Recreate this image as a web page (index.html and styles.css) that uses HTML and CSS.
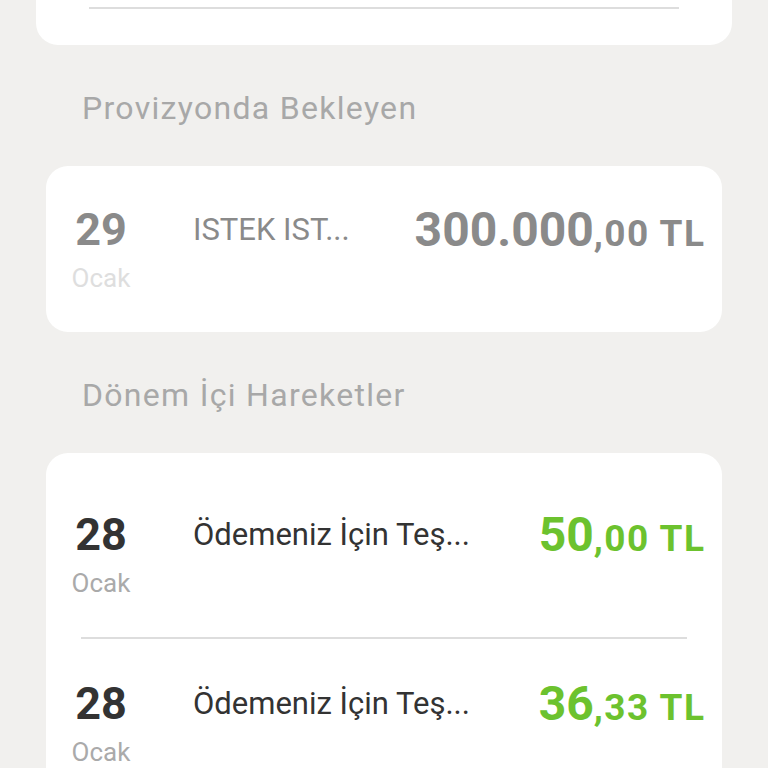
FILE: index.html
```html
<!DOCTYPE html>
<html lang="tr">
<head>
    <meta charset="UTF-8">
    <meta name="viewport" content="width=device-width, initial-scale=1.0">
    <title>Hesap Hareketleri</title>
    <link rel="stylesheet" href="styles.css">
</head>
<body>

<div class="page">
    <div class="card card-top">
        <div class="top-line"></div>
    </div>

    <h2 class="section-title">Provizyonda Bekleyen</h2>

    <div class="card card-pending">
        <div class="row">
            <div class="date">
                <span class="day">29</span>
                <span class="month">Ocak</span>
            </div>
            <div class="desc">ISTEK IST...</div>
            <div class="amount"><span class="main">300.000</span><span class="frac">,00 TL</span></div>
        </div>
    </div>

    <h2 class="section-title title-second">Dönem İçi Hareketler</h2>

    <div class="card card-moves">
        <div class="row">
            <div class="date">
                <span class="day">28</span>
                <span class="month">Ocak</span>
            </div>
            <div class="desc">Ödemeniz İçin Teş...</div>
            <div class="amount"><span class="main">50</span><span class="frac">,00 TL</span></div>
        </div>
        <div class="divider"></div>
        <div class="row">
            <div class="date">
                <span class="day">28</span>
                <span class="month">Ocak</span>
            </div>
            <div class="desc">Ödemeniz İçin Teş...</div>
            <div class="amount"><span class="main">36</span><span class="frac">,33 TL</span></div>
        </div>
    </div>
</div>

</body>
</html>
```

FILE: styles.css
```css
body {
    font-family: Roboto, "Noto Sans", sans-serif;
    margin: 0;
    padding: 0;
    background-color: #f1f0ee;
    overflow: hidden;
}
.page {
    height: 768px;
    overflow: hidden;
}
.card {
    background-color: #ffffff;
    border-radius: 22px;
}
.card-top {
    margin: -60px 36px 0 36px;
    height: 105px;
    padding: 0 53px;
    box-sizing: border-box;
    display: flex;
    flex-direction: column;
    justify-content: flex-end;
}
.top-line {
    height: 2px;
    background-color: #dddddd;
    margin-bottom: 36px;
}
.section-title {
    margin: 0;
    padding: 44px 0 0 82px;
    height: 80px;
    box-sizing: border-box;
    font-size: 32px;
    font-weight: 400;
    letter-spacing: 1.3px;
    color: #a8a8a8;
    line-height: 38px;
}
.card-pending,
.card-moves {
    margin: 0 46px;
    padding: 0 18px 0 25px;
}
.card-pending {
    margin-top: 41px;
    height: 166px;
    padding-top: 40px;
    box-sizing: border-box;
}
.title-second {
    padding-top: 44px;
}
.card-moves {
    margin-top: 41px;
    padding-top: 58px;
    padding-bottom: 80px;
}
.row {
    display: flex;
    align-items: flex-start;
}
.date {
    width: 60px;
    display: flex;
    flex-direction: column;
    align-items: center;
}
.day {
    font-size: 45px;
    font-weight: 700;
    line-height: 48px;
    color: #333333;
}
.month {
    font-size: 26px;
    line-height: 32px;
    color: #aaaaaa;
    margin-top: 8px;
}
.desc {
    margin-left: 62px;
    flex: 1;
    font-size: 31px;
    line-height: 48px;
    color: #333333;
}
.amount {
    font-weight: 700;
    line-height: 48px;
    color: #6cc22e;
    white-space: nowrap;
}
.amount .main {
    font-size: 48px;
}
.amount .frac {
    font-size: 37px;
    letter-spacing: 1.5px;
    margin-right: -1.5px;
}
.card-pending .day,
.card-pending .desc,
.card-pending .amount {
    color: #8a8a8a;
}
.card-pending .month {
    color: #dedede;
}
.divider {
    height: 2px;
    background-color: #dddddd;
    margin: 38px 17px 41px 10px;
}
```
